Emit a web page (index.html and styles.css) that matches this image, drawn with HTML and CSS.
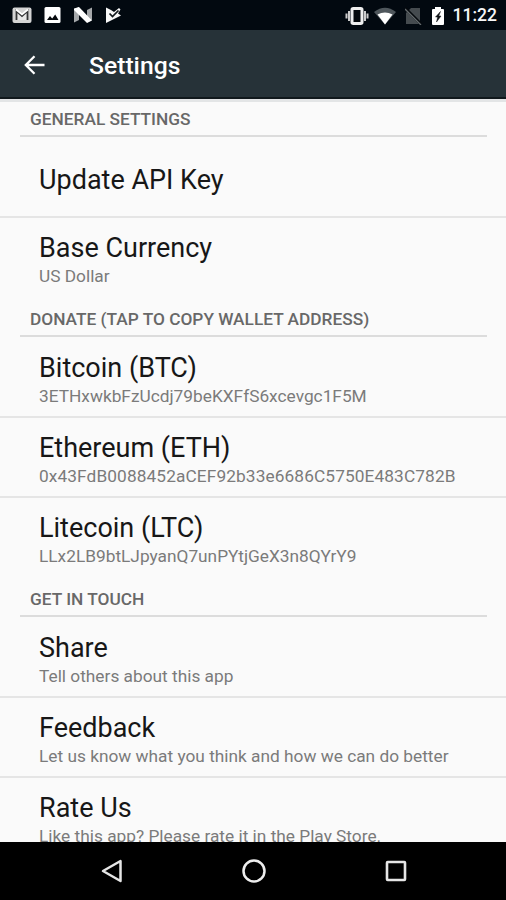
FILE: index.html
```html
<!DOCTYPE html>
<html lang="en">
<head>
<meta charset="utf-8">
<title>Settings</title>
<link rel="stylesheet" href="styles.css">
</head>
<body>
<div class="screen">
  <div class="status-bar">
    <div class="notifications">
      <svg width="20" height="18" viewBox="0 0 20 18"><rect x=".5" y="1.500" width="19" height="15.500" rx="2" fill="#d4d4d4"/><path d="M4.500 14V5l5.500 5 5.500-5v9" fill="#e8e8e8" stroke="#343536" stroke-width="1.800"/><path d="M4 3.500l6 5 6-5" fill="none" stroke="#fff" stroke-width="1.700"/></svg>
      <svg width="17" height="18" viewBox="0 0 17 18"><rect x=".5" y="1" width="16" height="16" rx="1.500" fill="#fff"/><path d="M3 14l3-4 2.200 2.500 3-4L14.500 14z" fill="#05090d"/></svg>
      <svg width="20" height="18" viewBox="0 0 20 18"><path d="M1 3.500L6 1v13l-5 2.500zM14 4l5-2.500V14l-5 2.500z" fill="#a5a8aa"/><path d="M1 2.500L6 1l13 13.500-5 2.500L1 4z" fill="#fff"/></svg>
      <svg width="17" height="18" viewBox="0 0 17 18"><path d="M1 1.500L6 4l3 2 5-4 1.500 1.500-2.500 4L16 9.500 1 17z" fill="#f8f8f8"/><path d="M4.500 7.500l3 3L13.500 4.500" fill="none" stroke="#11171b" stroke-width="1.700"/></svg>
    </div>
    <div class="indicators">
      <svg class="vibrate" width="24" height="20" viewBox="0 0 24 20"><rect x="7" y="2.500" width="10" height="15" rx="1.200" fill="#05090d" stroke="#eee" stroke-width="3"/><path d="M4 5v10M20 5v10M1.500 7.500v5M22.500 7.500v5" stroke="#ccc" stroke-width="2"/></svg>
      <svg class="wifi" width="22" height="18" viewBox="0 0 22 18"><path d="M0 5Q11-3.500 22 5L11 17.500z" fill="#4f575c"/><path d="M3.500 7.500q7.500-4 15 0l-7.500 10z" fill="#fff"/></svg>
      <svg class="sim" width="17" height="18" viewBox="0 0 17 18"><path d="M1 6l5-5h9v16H1z" fill="#454b4f"/><path d="M0 1l16 16" stroke="#05090d" stroke-width="3"/><path d="M0 2l16 16" stroke="#646a6d" stroke-width="1.300"/></svg>
      <svg class="battery" width="14" height="20" viewBox="0 0 14 20"><path d="M4 1h6v2h2q1 0 1 1v14q0 1-1 1H2q-1 0-1-1V4q0-1 1-1h2z" fill="#fff"/><path d="M9.500 5.500L4.500 11h2.200L5.500 16l4.500-6H7.700z" fill="#101418" stroke="#101418" stroke-width=".5"/></svg>
      <span class="clock">11:22</span>
    </div>
  </div>
  <header class="app-bar">
    <svg class="back" width="22" height="20" viewBox="0 0 22 20"><path d="M20.500 10H2M10.500 1.200L1.800 10l8.700 8.800" fill="none" stroke="#fff" stroke-width="2.300"/></svg>
    <h1>Settings</h1>
  </header>
  <main class="settings">
    <h2><span>GENERAL SETTINGS</span></h2>
    <section>
      <div class="row single"><h3>Update API Key</h3></div>
      <div class="row"><h3>Base Currency</h3><p>US Dollar</p></div>
    </section>
    <h2><span>DONATE (TAP TO COPY WALLET ADDRESS)</span></h2>
    <section>
      <div class="row"><h3>Bitcoin (BTC)</h3><p>3ETHxwkbFzUcdj79beKXFfS6xcevgc1F5M</p></div>
      <div class="row"><h3>Ethereum (ETH)</h3><p class="hex">0x43FdB0088452aCEF92b33e6686C5750E483C782B</p></div>
      <div class="row"><h3>Litecoin (LTC)</h3><p>LLx2LB9btLJpyanQ7unPYtjGeX3n8QYrY9</p></div>
    </section>
    <h2><span>GET IN TOUCH</span></h2>
    <section>
      <div class="row"><h3>Share</h3><p>Tell others about this app</p></div>
      <div class="row"><h3>Feedback</h3><p>Let us know what you think and how we can do better</p></div>
      <div class="row"><h3>Rate Us</h3><p>Like this app? Please rate it in the Play Store.</p></div>
    </section>
  </main>
  <nav class="nav-bar">
    <svg width="24" height="26" viewBox="0 0 24 26"><path d="M20.500 3v20L3 13z" fill="none" stroke="#e6e6e6" stroke-width="2.500" stroke-linejoin="round"/></svg>
    <svg width="26" height="26" viewBox="0 0 26 26"><circle cx="13" cy="13" r="10.500" fill="none" stroke="#eee" stroke-width="2.500"/></svg>
    <svg width="24" height="26" viewBox="0 0 24 26"><rect x="3" y="4" width="18" height="18" rx=".7" fill="none" stroke="#e6e6e6" stroke-width="2.600"/></svg>
  </nav>
</div>
</body>
</html>
```
FILE: styles.css
```css
* { box-sizing: border-box; }
body { margin: 0; font-family: Roboto, sans-serif; }
h1, h2, h3, p { margin: 0; }
svg { display: block; flex: none; }
.screen { width: 506px; height: 900px; display: flex; flex-direction: column; overflow: hidden; background: #fafafa; }
.status-bar { height: 30px; flex: none; display: flex; justify-content: space-between; align-items: center; padding: 0 9px 0 12px; background: #020910; }
.notifications { display: flex; align-items: center; gap: 12px; }
.indicators { display: flex; align-items: center; padding-top: 1px; }
.wifi { margin-left: 5px; }
.sim { margin-left: 9px; }
.battery { margin-left: 9px; }
.clock { margin-left: 8px; color: #f7f7f7; font-size: 17.500px; font-weight: 500; line-height: 29px; }
.app-bar { height: 69px; flex: none; display: flex; align-items: center; padding: 4px 24px 0; background: #263238; border-bottom: 2px solid #10181c; }
.back { margin-bottom: 2px; }
.app-bar h1 { margin-left: 43px; color: #fff; font-size: 24.700px; font-weight: 500; line-height: 32px; }
.settings { flex: 1; min-height: 0; overflow: hidden; border-top: 3px solid #e3e5e6; }
.settings h2 { height: 40px; margin: 0 19px 0 20px; padding: 12px 10px 0; border-bottom: 2px solid #dcdcdc; color: #686868; font-size: 17.300px; font-weight: 500; line-height: 20px; white-space: nowrap; }
.settings h2:first-child { height: 35px; padding-top: 7px; }
.row { height: 80px; padding: 14px 39px 0; }
.row + .row { border-top: 2px solid #e5e5e5; margin-top: -1px; height: 81px; padding-top: 13px; }
.row h3 { color: #171717; font-size: 27px; font-weight: 400; line-height: 34px; white-space: nowrap; }
.row p { margin-top: 1px; color: #7b7b7b; font-size: 17.300px; line-height: 20px; white-space: nowrap; }
.row .hex { letter-spacing: .1px; }
.single { padding-top: 26px; }
.nav-bar { height: 58px; flex: none; display: flex; justify-content: space-between; align-items: center; padding: 0 98px 0 100px; background: #000; }
```
